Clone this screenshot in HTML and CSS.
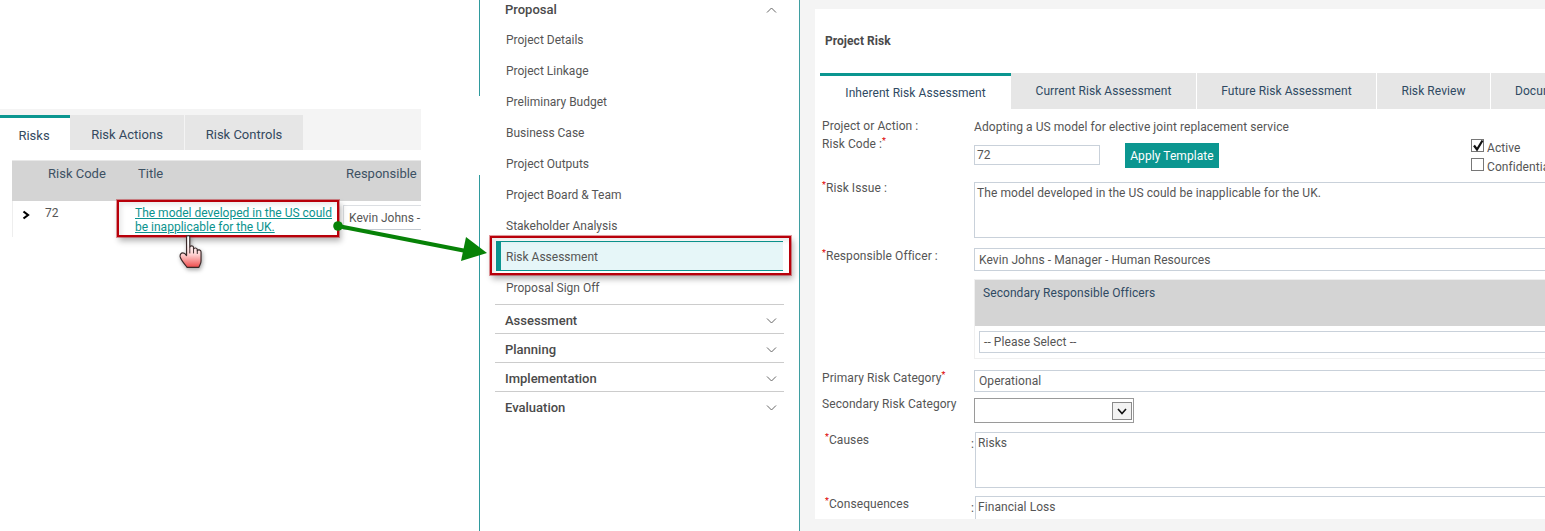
FILE: index.html
```html
<!DOCTYPE html>
<html lang="en">
<head>
<meta charset="utf-8">
<title>Project Risk</title>
<link rel="stylesheet" href="styles.css">
</head>
<body>
<div class="page">
  <section class="left">
    <div class="tabs">
      <div class="tab active">Risks</div>
      <div class="tab t2">Risk Actions</div>
      <div class="tab t3">Risk Controls</div>
    </div>
    <div class="table">
      <div class="thead">
        <div class="th c1"></div>
        <div class="th c2">Risk Code</div>
        <div class="th c3">Title</div>
        <div class="th c4">Responsible</div>
      </div>
      <div class="trow">
        <div class="chev">
          <svg width="10" height="10" viewBox="0 0 10 10"><path d="M2.5 1.5 L7 5 L2.5 8.5" fill="none" stroke="#000" stroke-width="2.2"/></svg>
        </div>
        <div class="code">72</div>
        <a class="link">The model developed in the US could be inapplicable for the UK.</a>
        <div class="resp">Kevin Johns -</div>
      </div>
    </div>
  </section>

  <div class="rule">
    <div class="seg top"></div>
    <div class="seg rest"></div>
  </div>

  <nav class="menu">
    <div class="group first"><span>Proposal</span>
      <svg class="caret" width="11" height="6" viewBox="0 0 11 6"><path d="M1 5.5 L5.5 1 L10 5.5" fill="none" stroke="#666" stroke-width="1"/></svg>
    </div>
    <div class="item">Project Details</div>
    <div class="item">Project Linkage</div>
    <div class="item">Preliminary Budget</div>
    <div class="item">Business Case</div>
    <div class="item">Project Outputs</div>
    <div class="item">Project Board &amp; Team</div>
    <div class="item">Stakeholder Analysis</div>
    <div class="item current">Risk Assessment</div>
    <div class="item">Proposal Sign Off</div>
    <div class="group line"><span>Assessment</span>
      <svg class="caret" width="11" height="6" viewBox="0 0 11 6"><path d="M1 .5 L5.5 5 L10 .5" fill="none" stroke="#666" stroke-width="1"/></svg>
    </div>
    <div class="group line"><span>Planning</span>
      <svg class="caret" width="11" height="6" viewBox="0 0 11 6"><path d="M1 .5 L5.5 5 L10 .5" fill="none" stroke="#666" stroke-width="1"/></svg>
    </div>
    <div class="group line"><span>Implementation</span>
      <svg class="caret" width="11" height="6" viewBox="0 0 11 6"><path d="M1 .5 L5.5 5 L10 .5" fill="none" stroke="#666" stroke-width="1"/></svg>
    </div>
    <div class="group line"><span>Evaluation</span>
      <svg class="caret" width="11" height="6" viewBox="0 0 11 6"><path d="M1 .5 L5.5 5 L10 .5" fill="none" stroke="#666" stroke-width="1"/></svg>
    </div>
  </nav>

  <main class="right">
    <div class="card">
      <h1 class="title">Project Risk</h1>
      <div class="rtabs">
        <div class="rtab on">Inherent Risk Assessment</div>
        <div class="rtab r2">Current Risk Assessment</div>
        <div class="rtab r3">Future Risk Assessment</div>
        <div class="rtab r4">Risk Review</div>
        <div class="rtab r5">Documents</div>
      </div>
      <div class="form">
        <div class="row r-project">
          <div class="lab">Project or Action :</div>
          <div class="val">Adopting a US model for elective joint replacement service</div>
        </div>
        <div class="row r-code">
          <div class="lab code-lab">Risk Code :<sup class="req">*</sup></div>
          <div class="field code-input">72</div>
          <div class="btn">Apply Template</div>
          <div class="checks">
            <div class="check"><span class="box"><svg width="14" height="14" viewBox="0 0 14 14"><path d="M3 6.5 L6 10.5 L11.5 1.5" fill="none" stroke="#111" stroke-width="2.2"/></svg></span>Active</div>
            <div class="check"><span class="box"></span>Confidential</div>
          </div>
        </div>
        <div class="row r-issue">
          <div class="lab up"><sup class="req">*</sup>Risk Issue :</div>
          <div class="field area">The model developed in the US could be inapplicable for the UK.</div>
        </div>
        <div class="row r-officer">
          <div class="lab"><sup class="req">*</sup>Responsible Officer :</div>
          <div class="field sel">Kevin Johns - Manager - Human Resources</div>
        </div>
        <div class="row r-secondary">
          <div class="lab"></div>
          <div class="sbox">
            <div class="shead">Secondary Responsible Officers</div>
            <div class="field sel inner">-- Please Select --</div>
          </div>
        </div>
        <div class="row r-primary">
          <div class="lab">Primary Risk Category<sup class="req">*</sup></div>
          <div class="field sel prim">Operational</div>
        </div>
        <div class="row r-seccat">
          <div class="lab up2">Secondary Risk Category</div>
          <div class="native">
            <span class="nbtn"><svg width="10" height="7" viewBox="0 0 10 7"><path d="M1 1 L5 5.5 L9 1" fill="none" stroke="#111" stroke-width="1.6"/></svg></span>
          </div>
        </div>
        <div class="row r-causes">
          <div class="lab ind"><sup class="req">*</sup>Causes</div>
          <div class="colon">:</div>
          <div class="field area">Risks</div>
        </div>
        <div class="row r-cons">
          <div class="lab ind"><sup class="req">*</sup>Consequences</div>
          <div class="colon">:</div>
          <div class="field area">Financial Loss</div>
        </div>
      </div>
    </div>
  </main>

  <div class="callout c-title"></div>
  <div class="callout c-menu"></div>

  <svg class="hand" width="30" height="41" viewBox="0 0 28 38">
    <defs>
      <linearGradient id="handfill" x1="0" y1="0" x2="0" y2="1">
        <stop offset="0.25" stop-color="#ffffff"/>
        <stop offset="0.6" stop-color="#ffd0d0"/>
        <stop offset="1" stop-color="#ee4a4a"/>
      </linearGradient>
    </defs>
    <path d="M8 2.5 C8 1 11 1 11 2.5 L11 12 C11.5 10.5 14.5 10.5 14.5 12.5 L14.5 14 C15 12.5 18 12.5 18 14.5 L18 15.5 C18.5 14 21.5 14.5 21.5 16.5 L21.5 25 C21.5 28 20 29 19.5 31 L8.5 31 C7 28.5 2.5 24.5 2 21 C1.7 18.5 3 17.5 4.5 17.5 C6 17.5 7 18.5 8 20 Z" fill="url(#handfill)" stroke="#3a2a2a" stroke-width="1.1" stroke-linejoin="round"/>
    <path d="M11 12 L11 18 M14.5 14 L14.5 18 M18 15.5 L18 18.5" stroke="#3a2a2a" stroke-width=".9" fill="none"/>
  </svg>

  <svg class="arrow" width="160" height="50" viewBox="0 0 160 50">
    <circle cx="8" cy="11" r="4.8" fill="#078207"/>
    <path d="M8 11 L136 36" stroke="#078207" stroke-width="4.2" fill="none"/>
    <path d="M136 22 L157 38 L131 46 Z" fill="#078207"/>
  </svg>
</div>
</body>
</html>
```

FILE: styles.css
```css
* { box-sizing: border-box; }
html, body { margin: 0; padding: 0; background: #fff; }
body { font-family: Roboto, "Liberation Sans", sans-serif; font-size: 12px; color: #555; }
.page { position: relative; display: flex; width: 1545px; height: 531px; overflow: hidden; }

/* left */
.left { width: 479px; flex: none; padding-top: 109px; }
.tabs { display: flex; align-items: flex-end; width: 421px; height: 41px; background: #f4f4f4; }
.tab { height: 35px; line-height: 40px; font-size: 13px; color: #34495e; background: #e6e6e6; text-align: center; }
.tab.active { width: 70px; background: #fff; border-top: 3px solid #0b9690; line-height: 35px; padding-right: 2px; }
.t2 { width: 114px; margin-right: 1px; }
.t3 { width: 118px; }
.table { width: 409px; margin: 10px 0 0 12px; overflow: hidden; }
.thead { display: flex; height: 41px; background: #d4d4d4; border-top: 1px solid #e8e8e8; font-size: 13px; color: #3d5163; line-height: 26px; }
.c1 { width: 36px; }
.c2 { width: 90px; }
.c3 { width: 208px; }
.c4 { white-space: nowrap; }
.trow { display: flex; align-items: flex-start; height: 36px; border-left: 1px solid #eee; }
.chev { width: 32px; flex: none; padding: 9px 0 0 8px; line-height: 0; }
.code { width: 90px; flex: none; padding-top: 5px; line-height: 14px; }
.link { width: 204px; flex: none; padding-top: 5px; line-height: 14px; color: #0a938e; text-decoration: underline; }
.resp { flex: none; margin: 4px 0 0 4px; width: 120px; height: 25px; padding-left: 5px; line-height: 25px; border: 1px solid #dcdfe3; border-bottom-color: #c5ccd3; white-space: nowrap; }

/* rule */
.rule { width: 1px; flex: none; display: flex; flex-direction: column; }
.seg { background: #2f9a9d; }
.seg.top { height: 96px; }
.seg.rest { flex: 1; margin-top: 79px; }

/* menu */
.menu { width: 319px; flex: none; padding: 0 15px; }
.group { display: flex; justify-content: space-between; align-items: center; height: 29px; padding: 3px 7px 0 10px; font-size: 13px; font-weight: 500; color: #4a4a4a; }
.group.first { height: 19px; padding-top: 0; margin-bottom: 6px; }
.group.line { border-top: 1px solid #ccc; }
.item { height: 31px; line-height: 31px; padding-left: 11px; color: #555; }
.item.current { height: 30px; margin: -1px 1px 2px; line-height: 30px; padding-left: 5px; background: #e6f6f8; border-left: 5px solid #0b9690; border-top: 1px solid #0b9690; border-bottom: 1px solid #0b9690; }

/* right */
.right { flex: 1; background: #f4f4f4; border-left: 1px solid #3f9ea1; padding: 9px 0 12px 15px; overflow: hidden; min-width: 0; }
.card { background: #fff; width: 900px; height: 510px; overflow: hidden; }
.title { margin: 0; padding: 24px 0 0 10px; height: 64px; font-size: 12px; line-height: 16px; font-weight: 700; color: #4a4a4a; letter-spacing: .05px; }
.rtabs { display: flex; margin-left: 5px; height: 36px; font-size: 12px; color: #2f4a63; letter-spacing: .07px; }
.rtab { background: #e6e6e6; line-height: 37px; text-align: center; white-space: nowrap; flex: none; }
.rtab.on { width: 191px; background: #fff; border-top: 3px solid #0b9690; line-height: 35px; }
.r2 { width: 185px; margin-right: 1px; }
.r3 { width: 179px; margin-right: 1px; }
.r4 { width: 113px; margin-right: 1px; }
.r5 { width: 120px; text-align: left; padding-left: 24px; }

.form { padding-left: 7px; letter-spacing: .07px; }
.row { display: flex; align-items: flex-start; }
.lab { width: 152px; flex: none; line-height: 16px; white-space: nowrap; color: #555; }
.code-lab { padding-top: 1px; }
.req { color: #d00; font-size: 9px; line-height: 0; vertical-align: 4px; }
.val { line-height: 16px; padding-top: 1px; color: #555; }
.field { border: 1px solid #c9d1da; background: #fff; color: #555; flex: none; }
.sel { width: 700px; height: 23px; line-height: 23px; padding-left: 4px; }
.prim { height: 22px; line-height: 21px; }
.area { width: 700px; height: 56px; padding: 2px 0 0 2px; line-height: 16px; }

.r-project { margin-top: 9px; height: 17px; }
.r-code { height: 40px; }
.code-input { margin-top: 10px; width: 126px; height: 20px; line-height: 18px; padding-left: 2px; }
.btn { flex: none; margin: 8px 0 0 25px; width: 94px; height: 25px; line-height: 26px; text-align: center; background: #0b9690; color: #fff; }
.checks { flex: none; margin: 3px 0 0 252px; }
.check { display: flex; align-items: center; height: 19px; white-space: nowrap; color: #555; }
.box { flex: none; width: 13px; height: 13px; margin: 0 3px 4px 0; border: 1px solid #777; line-height: 0; position: relative; }
.box svg { position: absolute; left: -1px; top: -1px; }
.r-issue { margin-top: 7px; }
.up { margin-top: -2px; }
.r-officer { margin-top: 10px; }
.r-secondary { margin-top: 8px; }
.sbox { width: 700px; height: 80px; border: 1px solid #f0f0f0; flex: none; }
.shead { height: 46px; background: #d4d4d4; color: #2f4a63; padding: 5px 0 0 8px; line-height: 16px; }
.inner { margin: 5px 0 0 4px; height: 22px; line-height: 20px; }
.r-primary { margin-top: 11px; }
.r-seccat { margin-top: 6px; }
.up2 { margin-top: -2px; }
.native { flex: none; width: 160px; height: 25px; border: 1px solid #9a9a9a; display: flex; justify-content: flex-end; align-items: flex-start; padding: 3px 1px 0 0; background: #fff; }
.nbtn { width: 20px; height: 18px; border: 1px solid #8a8a8a; background: #f2f2f2; display: flex; align-items: center; justify-content: center; }
.r-causes { margin-top: 9px; }
.r-cons { margin-top: 8px; }
.ind { width: 149px; padding-left: 3px; }
.colon { width: 4px; flex: none; line-height: 16px; padding-top: 4px; }

/* overlays */
.callout { position: absolute; border: 2px solid #b8000a; box-shadow: 0 0 0 1px rgba(184,0,10,.4), 2px 4px 6px rgba(0,0,0,.3), inset 3px 3px 4px rgba(0,0,0,.08); }
.c-title { left: 117px; top: 200px; width: 222px; height: 37px; }
.c-menu { left: 490px; top: 236px; width: 301px; height: 39px; }
.hand { position: absolute; left: 178px; top: 234px; filter: drop-shadow(1px 2px 2px rgba(0,0,0,.35)); }
.arrow { position: absolute; left: 330px; top: 215px; }
```
